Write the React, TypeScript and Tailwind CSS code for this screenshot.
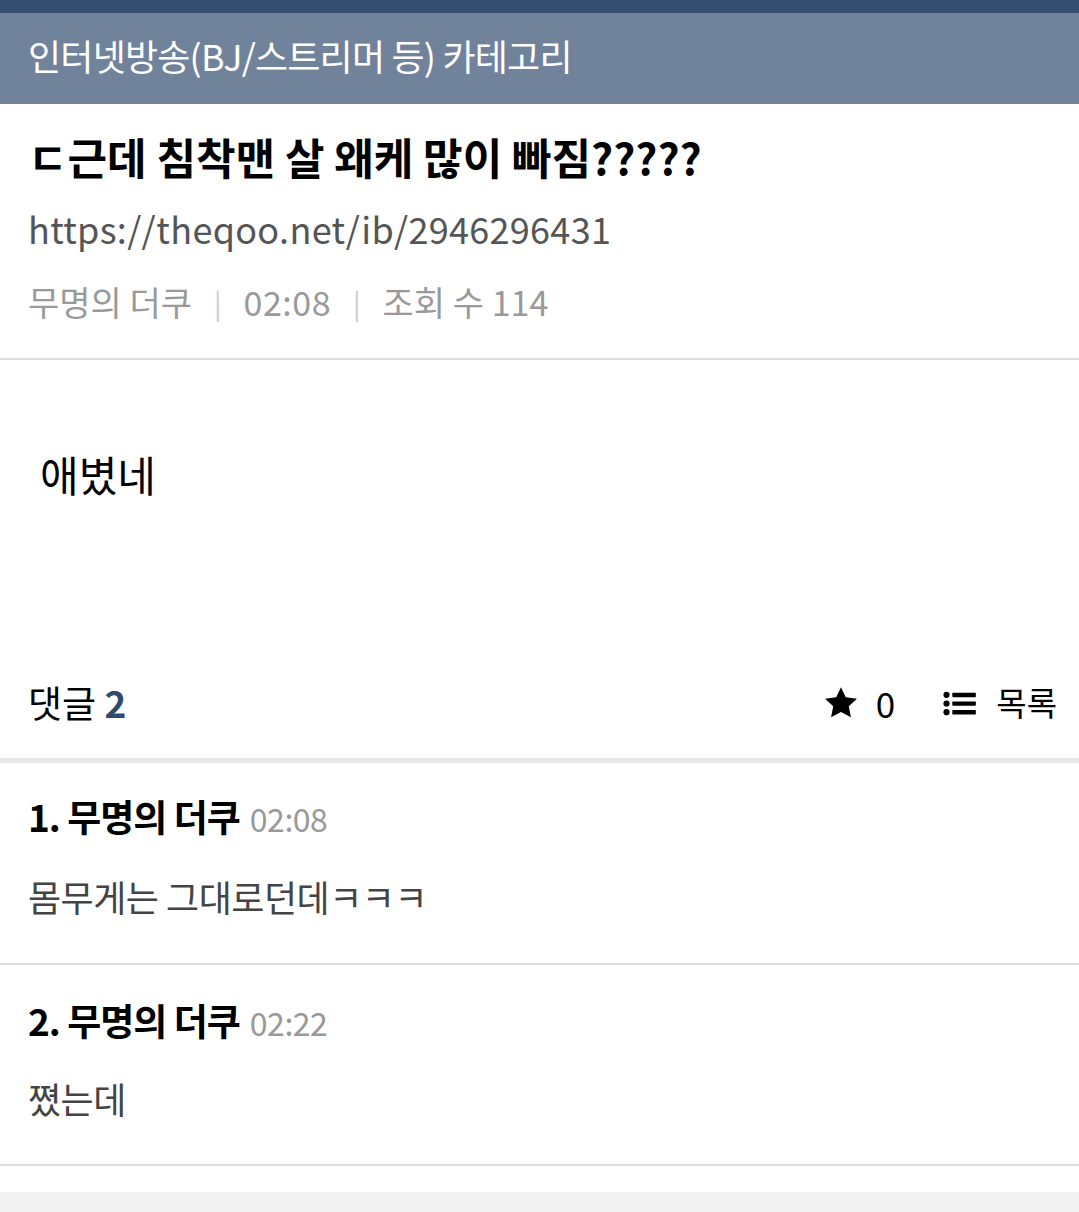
import React from "react";

const F = { fontFamily: '"Noto Sans CJK KR", "Noto Sans", sans-serif' };

function Star() {
  return (
    <svg width="38" height="36" viewBox="0 0 24 24" fill="#000">
      <path d="M12 1.5l3.2 6.7 7.4.9-5.4 5.1 1.4 7.3L12 18l-6.6 3.5 1.4-7.3L1.4 9.1l7.4-.9z" />
    </svg>
  );
}

function ListIcon() {
  return (
    <svg width="33" height="25" viewBox="0 0 34 26" fill="#000">
      <circle cx="3.5" cy="4" r="3.2" />
      <circle cx="3.5" cy="13" r="3.2" />
      <circle cx="3.5" cy="22" r="3.2" />
      <rect x="9.5" y="1.8" width="24.5" height="4.6" rx="0.8" />
      <rect x="9.5" y="10.8" width="24.5" height="4.6" rx="0.8" />
      <rect x="9.5" y="19.8" width="24.5" height="4.6" rx="0.8" />
    </svg>
  );
}

export default function App() {
  return (
    <div className="w-[1079px] h-[1212px] bg-white overflow-hidden flex flex-col" style={F}>
      <div className="h-[13px] bg-[#334d6e]" />
      <div className="h-[91px] bg-[#71829b] flex items-center px-[28px] pb-[8px]">
        <span className="text-white text-[36px] leading-none tracking-[-0.8px]">인터넷방송(BJ/스트리머 등) 카테고리</span>
      </div>
      <div className="px-[28px] pt-[22px] pb-[26px] border-b-2 border-[#dddddd]">
        <div className="text-[43px] font-bold leading-[60px] text-black tracking-[0px]">ㄷ근데 침착맨 살 왜케 많이 빠짐?????</div>
        <div className="text-[36px] leading-[60px] text-[#555] mt-[12px] tracking-[0.3px]">https://theqoo.net/ib/2946296431</div>
        <div className="text-[34px] leading-[60px] text-[#999] mt-[14px] flex items-center">
          <span>무명의 더쿠</span>
          <span className="mx-[22px] text-[#ccc] text-[28px]">|</span>
          <span className="tracking-[0.5px]">02:08</span>
          <span className="mx-[22px] text-[#ccc] text-[28px]">|</span>
          <span>조회 수 114</span>
        </div>
      </div>
      <div className="h-[300px] px-[40px] pt-[84px]">
        <div className="text-[42px] leading-[60px] text-black">애볐네</div>
      </div>
      <div className="h-[103px] pl-[28px] pr-[22px] pb-[12px] flex items-center justify-between border-b-[5px] border-[#e8e8e8]">
        <div className="text-[37px] text-black">
          댓글 <span className="font-bold text-[#2f4a6b]">2</span>
        </div>
        <div className="flex items-center">
          <Star />
          <span className="text-[35px] ml-[16px] text-black">0</span>
          <span className="ml-[48px] flex items-center"><ListIcon /></span>
          <span className="text-[33px] ml-[20px] text-black">목록</span>
        </div>
      </div>
      <div className="px-[28px] pt-[22px] pb-[36px] border-b-2 border-[#dddddd]">
        <div className="flex items-baseline">
          <span className="text-[37px] font-bold leading-[62px] text-black tracking-[-1px]">1. 무명의 더쿠</span>
          <span className="text-[32px] text-[#999] ml-[10px] tracking-[-0.5px]">02:08</span>
        </div>
        <div className="text-[36px] leading-[62px] text-[#444] mt-[18px] tracking-[-0.5px]">몸무게는 그대로던데ㅋㅋㅋ</div>
      </div>
      <div className="px-[28px] pt-[24px] pb-[35px] border-b-2 border-[#dddddd]">
        <div className="flex items-baseline">
          <span className="text-[37px] font-bold leading-[62px] text-black tracking-[-1px]">2. 무명의 더쿠</span>
          <span className="text-[32px] text-[#999] ml-[10px] tracking-[-0.5px]">02:22</span>
        </div>
        <div className="text-[36px] leading-[62px] text-[#444] mt-[16px] tracking-[-0.5px]">쪘는데</div>
      </div>
      <div className="h-[26px] bg-white" />
      <div className="flex-1 bg-[#f2f2f2]" />
    </div>
  );
}
